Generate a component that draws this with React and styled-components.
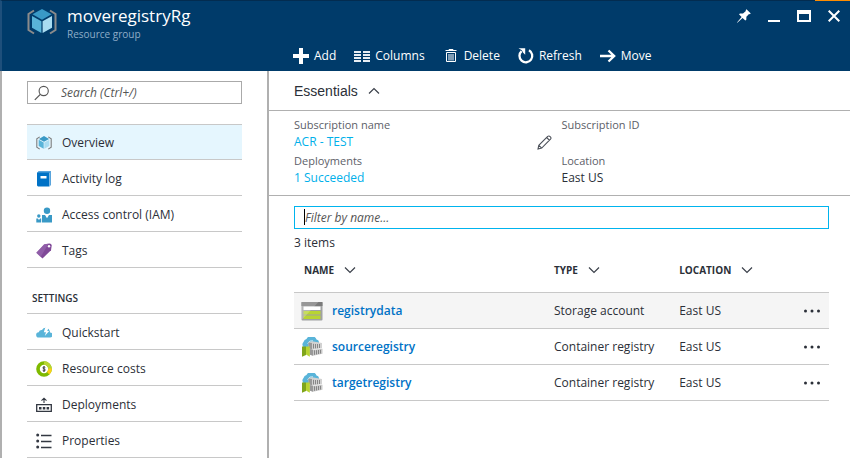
import React from "react";
import styled, { createGlobalStyle } from "styled-components";

const GlobalStyle = createGlobalStyle`
  *, *::before, *::after { box-sizing: border-box; }
  body {
    margin: 0;
    background: #fff;
    color: #2b2f38;
    font-family: "Open Sans", "Segoe UI", "Noto Sans", sans-serif;
    font-size: 12px;
    line-height: 16px;
  }
  button, input { font: inherit; color: inherit; }
  svg { display: block; flex: none; }
`;

const Blade = styled.div`
  display: flex;
  flex-direction: column;
  min-height: 100vh;
`;

const Header = styled.header`
  height: 71px;
  padding: 6px 8px 0 25px;
  background: #003b6a;
  color: #fff;
  border-top: 1px solid #032c50;
  border-left: 2px solid #1e4f7b;
  display: grid;
  grid-template-columns: 266px 1fr auto;
  grid-template-rows: 37px 24px;
  position: relative;

  &::after {
    content: "";
    position: absolute;
    top: -1px;
    right: 0;
    width: 35px;
    height: 1px;
    background: #ff8c00;
  }
`;

const Brand = styled.div`
  display: flex;
  gap: 10px;
`;

const Title = styled.h1`
  margin: 0;
  font-size: 17px;
  line-height: 18px;
  font-weight: 400;
`;

const Subtitle = styled.p`
  margin: 2px 0 0;
  font-size: 10px;
  line-height: 14px;
  color: #8fadc8;
`;

const WindowControls = styled.div`
  grid-column: 3;
  display: flex;
  align-items: flex-start;
  gap: 14px;
`;

const IconButton = styled.button`
  display: flex;
  align-items: center;
  justify-content: center;
  width: ${(p) => p.$width || 16}px;
  height: ${(p) => p.$height || 18}px;
  padding: 0;
  border: 0;
  background: none;
  cursor: pointer;
`;

const Toolbar = styled.div`
  grid-column: 2 / 4;
  display: flex;
  align-items: center;
  gap: 18px;
`;

const ToolButton = styled.button`
  display: flex;
  align-items: center;
  gap: 5px;
  padding: 0;
  border: 0;
  background: none;
  line-height: 18px;
  white-space: nowrap;
  cursor: pointer;
`;

const Body = styled.div`
  flex: 1;
  display: flex;
  border-left: 2px solid #b0b0b0;
`;

const Sidebar = styled.aside`
  width: 267px;
  flex: none;
  padding: 10px 25px 0;
  border-right: 2px solid #b0b0b0;
`;

const SearchBox = styled.label`
  display: flex;
  align-items: center;
  gap: 11px;
  height: 23px;
  padding: 0 6px;
  border: 1px solid #aaa;
  margin-bottom: 20px;
`;

const TextInput = styled.input`
  flex: 1;
  min-width: 0;
  padding: 0;
  border: 0;
  outline: 0;
  background: transparent;

  &::placeholder {
    color: #555;
    opacity: 1;
    font-style: italic;
  }
`;

const NavList = styled.ul`
  margin: 0;
  padding: 0;
  list-style: none;
  border-top: 1px solid #c8c8c8;
`;

const NavItem = styled.li`
  border-bottom: 1px solid #c8c8c8;
`;

const NavLink = styled.a`
  display: flex;
  align-items: center;
  gap: 10px;
  height: ${(p) => (p.$active ? 34 : 35)}px;
  padding: 2px 10px 0 9px;
  color: inherit;
  text-decoration: none;
  background: ${(p) => (p.$active ? "#e5f6fe" : "transparent")};
`;

const NavHeading = styled.h2`
  margin: 0;
  padding: 22px 5px 7px;
  font-size: 10px;
  line-height: 16px;
  font-weight: 600;
`;

const Main = styled.main`
  flex: 1;
  min-width: 0;
`;

const EssentialsToggle = styled.button`
  display: flex;
  align-items: center;
  gap: 10px;
  width: 100%;
  height: 40px;
  padding: 0 25px;
  border: 0;
  border-bottom: 1px solid #b0b0b0;
  background: none;
  font-family: "Liberation Sans", Arial, sans-serif;
  font-size: 14px;
  cursor: pointer;
`;

const Essentials = styled.div`
  display: grid;
  grid-template-columns: 1fr 1fr;
  row-gap: 3px;
  padding: 6px 21px 9px 25px;
  border-bottom: 1px solid #b0b0b0;
`;

const Property = styled.div`
  display: flex;
  align-items: flex-end;
  justify-content: space-between;
  height: 33px;
  padding-right: 10px;
`;

const PropertyList = styled.dl`
  margin: 0;
  height: 33px;
`;

const PropertyName = styled.dt`
  font-size: 11px;
  color: #5c6068;
`;

const PropertyValue = styled.dd`
  margin: 0;
  font-size: 12px;
  line-height: 18px;
`;

const ValueLink = styled.a`
  color: #00b0ea;
  text-decoration: none;
`;

const Items = styled.section`
  padding: 10px 21px 0 25px;
`;

const FilterBox = styled.label`
  position: relative;
  display: flex;
  align-items: center;
  height: 23px;
  padding: 0 10px;
  border: 1px solid #00b4ee;
`;

const Caret = styled.span`
  position: absolute;
  left: 9px;
  top: 2px;
  width: 1px;
  height: 16px;
  background: #000;
`;

const Count = styled.p`
  margin: 6px 0 9px;
`;

const Table = styled.table`
  width: 100%;
  table-layout: fixed;
  border-collapse: collapse;
`;

const Row = styled.tr`
  height: 36px;
  border-top: 1px solid #c8c8c8;
  border-bottom: 1px solid #c8c8c8;
  background: ${(p) => (p.$highlight ? "#f5f5f5" : "transparent")};
`;

const Th = styled.th`
  width: ${(p) => p.$width};
  height: 32px;
  padding: ${(p) => (p.$first ? "0 0 11px 10px" : "0 0 11px")};
  text-align: left;
`;

const SortButton = styled.button`
  display: flex;
  align-items: center;
  gap: 10px;
  padding: 0;
  border: 0;
  background: none;
  font-size: 10px;
  font-weight: 700;
  cursor: pointer;
`;

const Td = styled.td`
  padding: 2px 0 0;
`;

const NameCell = styled.div`
  display: flex;
  align-items: center;
  gap: 9px;
  padding-left: 7px;
`;

const NameLink = styled.a`
  color: #0072c6;
  font-weight: 600;
  text-decoration: none;
`;

const ActionCell = styled.div`
  display: flex;
  justify-content: flex-end;
  padding-right: 8px;
`;

function ResourceGroupIcon({ size, bracket }) {
  return (
    <svg width={size} height={size} viewBox="0 0 30 30">
      <path d="M7 3.5 1.5 7v16L7 26.500M23 3.500 28.500 7v16L23 26.500" fill="none" stroke={bracket} strokeWidth="2" />
      <path d="M15 2 24.500 7.300 15 12.700 5.500 7.300z" fill="#3999c6" />
      <path d="M5 9 14.400 14.200V26L5 20.700z" fill="#59b4d9" />
      <path d="M25 9 15.600 14.200V26L25 20.700z" fill="#a9dcf1" />
    </svg>
  );
}

function PinIcon() {
  return (
    <svg width="14" height="14" viewBox="0 0 14 14">
      <path d="M9.500.2 13.800 4.500 12.600 5.200 12 5 9.400 7.800 9.300 10.700 8.300 11.600 5.600 9 .3 13.700 0 13.500 4.600 7.900 2 5.300 3 4.500 6 4.500 8.900 2 8.700 1.200z" fill="#fff" />
    </svg>
  );
}

function MinimizeIcon() {
  return (
    <svg width="12" height="12" viewBox="0 0 12 12">
      <rect y="10" width="12" height="2" fill="#fff" />
    </svg>
  );
}

function MaximizeIcon() {
  return (
    <svg width="14" height="12" viewBox="0 0 14 12">
      <path d="M0 0h14v12H0zM2 4v6h10V4z" fill="#fff" fillRule="evenodd" />
    </svg>
  );
}

function CloseIcon() {
  return (
    <svg width="12" height="12" viewBox="0 0 12 12">
      <path d="M.7.700 11.300 11.300M11.300.700.700 11.300" stroke="#fff" strokeWidth="2" />
    </svg>
  );
}

function AddIcon() {
  return (
    <svg width="16" height="16" viewBox="0 0 16 16">
      <path d="M6 0h4v6h6v4H10v6H6V10H0V6h6z" fill="#fff" />
    </svg>
  );
}

function ColumnsIcon() {
  return (
    <svg width="16" height="16" viewBox="0 0 16 16">
      <path d="M0 3h7v2H0zM9 3h7v2H9zM0 6h7v2H0zM9 6h7v2H9zM0 9h7v2H0zM9 9h7v2H9zM0 12h7v2H0zM9 12h7v2H9z" fill="#e8eef4" />
    </svg>
  );
}

function DeleteIcon() {
  return (
    <svg width="16" height="16" viewBox="0 0 16 16">
      <path d="M6 2V1.500h4V2M2.500 2.500h11" fill="none" stroke="#fff" strokeWidth="1" />
      <path d="M3.500 4.500v9h9v-9z" fill="none" stroke="#fff" strokeWidth="1" />
      <path d="M6 6v6.500M8 6v6.500M10 6v6.500" stroke="#fff" strokeWidth="1" />
    </svg>
  );
}

function RefreshIcon() {
  return (
    <svg width="16" height="16" viewBox="0 0 16 16">
      <path d="M11 2.300a6.400 6.400 0 1 1-7.400.8" fill="none" stroke="#fff" strokeWidth="2.300" />
      <path d="M.500.200H7.200V6.800L5.200 4.800 3.800 2.300z" fill="#fff" />
    </svg>
  );
}

function MoveIcon() {
  return (
    <svg width="16" height="16" viewBox="0 0 16 16">
      <path d="M0 8h14M8.500 2.500 14.200 8 8.500 13.500" fill="none" stroke="#fff" strokeWidth="2.300" />
    </svg>
  );
}

function SearchIcon() {
  return (
    <svg width="16" height="16" viewBox="0 0 16 16">
      <circle cx="9.700" cy="6" r="4.600" fill="none" stroke="#555" strokeWidth="1.100" />
      <path d="M6.300 9.300.8 14.800" stroke="#555" strokeWidth="1.200" />
    </svg>
  );
}

function LogIcon() {
  return (
    <svg width="16" height="16" viewBox="0 0 16 16">
      <path d="M2.500 0H15v14l-1 1V2H1.200z" fill="#59a4dc" />
      <path d="M1 1.500h12.500V15.500H2L1 14.500z" fill="#0072c6" />
      <rect x="4.500" y="5" width="6" height="2.500" fill="#fff" />
    </svg>
  );
}

function PeopleIcon() {
  return (
    <svg width="16" height="16" viewBox="0 0 16 16">
      <circle cx="11" cy="3.800" r="3.200" fill="#3999c6" />
      <path d="M6 15.500V8h3l2 3.300L13 8h3v7.500z" fill="#3999c6" />
      <circle cx="2.800" cy="9" r="1.700" fill="#3999c6" />
      <path d="M.3 15.500v-4h1.500l1.200 1.500 1.100-1.500h1.100v4z" fill="#3999c6" />
    </svg>
  );
}

function TagIcon() {
  return (
    <svg width="16" height="16" viewBox="0 0 16 16">
      <path d="M.300 9.800 8.300 1.300 13.500.5Q15.600.5 15.700 2.500L15 7.200 6.500 15.500z" fill="#804998" />
      <path d="M.300 9.800 8.300 1.300 12.500.700 4.600 14z" fill="#9b6ab2" opacity=".6" />
      <circle cx="13" cy="3.300" r="1.200" fill="#fff" />
    </svg>
  );
}

function QuickstartIcon() {
  return (
    <svg width="16" height="16" viewBox="0 0 16 16">
      <path d="M2.800 12.500a2.600 2.600 0 0 1-.1-5.200A3.200 3.200 0 0 1 6 5a4.300 4.300 0 0 1 7.900 1.200v1.300a2.500 2.500 0 0 1 .2 5z" fill="#59b4d9" />
      <path d="M9.300 2.500h3.500L11.200 6h2L8.800 11l1.200-3.800H7.800z" fill="#fff" />
    </svg>
  );
}

function CostsIcon() {
  return (
    <svg width="16" height="16" viewBox="0 0 16 16">
      <circle cx="8" cy="8" r="6" fill="none" stroke="#7fba00" strokeWidth="3.600" />
      <path d="M8 2a6 6 0 0 1 5.600 8" fill="none" stroke="#b8d432" strokeWidth="3.600" />
      <path d="M13.900 7.500a6 6 0 0 1-1.700 4.800" fill="none" stroke="#fcd116" strokeWidth="3.600" />
      <path d="M9.300 6.500Q8.800 6 8 6 6.900 6 6.900 6.900C6.900 8.100 9.300 7.700 9.300 9Q9.300 9.900 8 9.900 7.200 9.900 6.700 9.400M8 5v6" fill="none" stroke="#333" strokeWidth=".9" />
    </svg>
  );
}

function DeploymentsIcon() {
  return (
    <svg width="16" height="16" viewBox="0 0 16 16">
      <path d="M8 6V1.200M5.500 3.700 8 1.200l2.500 2.500" fill="none" stroke="#333842" strokeWidth="1.100" />
      <path d="M.700 7.700h14.600v6.600H.700z" fill="none" stroke="#333842" strokeWidth="1.300" />
      <path d="M3 10h2.500v2.400H3zM6.800 10h2.500v2.400H6.800zM10.600 10h2.500v2.400h-2.500z" fill="#333842" />
    </svg>
  );
}

function PropertiesIcon() {
  return (
    <svg width="16" height="16" viewBox="0 0 16 16">
      <circle cx="1.700" cy="2" r="1.500" fill="#333842" />
      <circle cx="1.700" cy="8" r="1.500" fill="#333842" />
      <circle cx="1.700" cy="14" r="1.500" fill="#333842" />
      <path d="M5 2.500h10.500M5 8.500h10.500M5 14.500h10.500" stroke="#333842" strokeWidth="1.700" />
    </svg>
  );
}

function Chevron({ up }) {
  return (
    <svg width="12" height="8" viewBox="0 0 12 8">
      <path d={up ? "M1 6.500 6 1.500 11 6.500" : "M1 1.500 6 6.500 11 1.500"} fill="none" stroke="#3b404a" strokeWidth="1.200" />
    </svg>
  );
}

function PencilIcon() {
  return (
    <svg width="15" height="15" viewBox="0 0 15 15">
      <path d="M1 14 1.800 10.300 10.700 1.400Q12 .4 13.200 1.700 14.600 3 13.500 4.200L4.700 13.100zM1.800 10.300 4.700 13.100M9.700 2.500l2.800 2.800" fill="none" stroke="#4a4f58" strokeWidth="1.100" />
    </svg>
  );
}

function StorageIcon() {
  return (
    <svg width="22" height="20" viewBox="0 0 22 20">
      <rect x=".5" y="1" width="21" height="18.500" rx="1" fill="#a0a1a2" />
      <path d="M.500 1h21v4H.500z" fill="#7a7a7a" />
      <path d="M2.500 5.500h17V9h-17z" fill="#fff" />
      <path d="M2.500 10h17v3.500h-17zM2.500 14.500h17V18h-17z" fill="#b8d432" />
      <path d="M.500 1h17L2 17.500.500 19z" fill="#fff" opacity=".22" />
    </svg>
  );
}

function RegistryIcon() {
  return (
    <svg width="22" height="20" viewBox="0 0 22 20">
      <path d="M3 10.500A3.500 3.500 0 0 1 2.500 5 4.500 4.500 0 0 1 5.500 2 5.500 5.500 0 0 1 15.500 2.500 3 3 0 0 1 18 5v4z" fill="#59b4d9" />
      <path d="M6.500 6.500Q8.500 3 12 3.800" fill="none" stroke="#fff" opacity=".7" />
      <path d="M7.500 5.500 11 4.300 21 6v5.200L11 12.500 7.500 11z" fill="#d2d2d2" />
      <path d="M7.500 5.500 11 6v6.500L7.500 11z" fill="#999" />
      <path d="M12.500 6.800v4.700M14.500 7v4.300M16.500 7v4.200M18.500 7v4" stroke="#868686" />
      <path d="M8.500 12 12 12.800 21.500 11.800v5L12 18.800 8.500 17.500z" fill="#cacaca" />
      <path d="M8.500 12 12 12.800v6L8.500 17.500z" fill="#999" />
      <path d="M13.500 13.300v4.500M15.500 13.200v4.200M17.500 13v4M19.500 12.800v3.700" stroke="#858585" />
      <path d="M1 9.500h4V18L1 19.700z" fill="#7fa51b" />
      <path d="M5 9.500H8.800V19.700L5 17.500z" fill="#b8d432" />
    </svg>
  );
}

function EllipsisIcon() {
  return (
    <svg width="18" height="6" viewBox="0 0 18 6">
      <circle cx="2.500" cy="3" r="1.500" fill="#2b2f38" />
      <circle cx="9" cy="3" r="1.500" fill="#2b2f38" />
      <circle cx="15.500" cy="3" r="1.500" fill="#2b2f38" />
    </svg>
  );
}

const tools = [
  { label: "Add", Icon: AddIcon },
  { label: "Columns", Icon: ColumnsIcon },
  { label: "Delete", Icon: DeleteIcon },
  { label: "Refresh", Icon: RefreshIcon },
  { label: "Move", Icon: MoveIcon },
];

const generalLinks = [
  { label: "Overview", icon: <ResourceGroupIcon size={16} bracket="#7a7a7a" />, active: true },
  { label: "Activity log", icon: <LogIcon /> },
  { label: "Access control (IAM)", icon: <PeopleIcon /> },
  { label: "Tags", icon: <TagIcon /> },
];

const settingsLinks = [
  { label: "Quickstart", icon: <QuickstartIcon /> },
  { label: "Resource costs", icon: <CostsIcon /> },
  { label: "Deployments", icon: <DeploymentsIcon /> },
  { label: "Properties", icon: <PropertiesIcon /> },
];

const resources = [
  { name: "registrydata", type: "Storage account", location: "East US", Icon: StorageIcon },
  { name: "sourceregistry", type: "Container registry", location: "East US", Icon: RegistryIcon },
  { name: "targetregistry", type: "Container registry", location: "East US", Icon: RegistryIcon },
];

const columns = [
  { label: "NAME", width: "48.6%" },
  { label: "TYPE", width: "23.4%" },
  { label: "LOCATION", width: "20%" },
];

function Navigation({ links }) {
  return (
    <NavList>
      {links.map(({ label, icon, active }) => (
        <NavItem key={label}>
          <NavLink href="#" $active={active} aria-current={active ? "page" : undefined}>
            {icon}
            {label}
          </NavLink>
        </NavItem>
      ))}
    </NavList>
  );
}

function EssentialProperty({ name, value, link, editable }) {
  return (
    <Property>
      <PropertyList>
        <PropertyName>{name}</PropertyName>
        <PropertyValue>{link ? <ValueLink href="#">{value}</ValueLink> : value}</PropertyValue>
      </PropertyList>
      {editable && (
        <IconButton aria-label="Change subscription" $width={15} $height={15}>
          <PencilIcon />
        </IconButton>
      )}
    </Property>
  );
}

export default function App() {
  return (
    <>
      <GlobalStyle />
      <Blade>
        <Header>
          <Brand>
            <ResourceGroupIcon size={30} bracket="#8b8b8b" />
            <div>
              <Title>moveregistryRg</Title>
              <Subtitle>Resource group</Subtitle>
            </div>
          </Brand>
          <WindowControls>
            <IconButton aria-label="Pin"><PinIcon /></IconButton>
            <IconButton aria-label="Minimize"><MinimizeIcon /></IconButton>
            <IconButton aria-label="Maximize"><MaximizeIcon /></IconButton>
            <IconButton aria-label="Close"><CloseIcon /></IconButton>
          </WindowControls>
          <Toolbar>
            {tools.map(({ label, Icon }) => (
              <ToolButton key={label}>
                <Icon />
                {label}
              </ToolButton>
            ))}
          </Toolbar>
        </Header>
        <Body>
          <Sidebar>
            <SearchBox>
              <SearchIcon />
              <TextInput type="text" placeholder="Search (Ctrl+/)" aria-label="Search" />
            </SearchBox>
            <Navigation links={generalLinks} />
            <NavHeading>SETTINGS</NavHeading>
            <Navigation links={settingsLinks} />
          </Sidebar>
          <Main>
            <EssentialsToggle aria-expanded="true">
              Essentials
              <Chevron up />
            </EssentialsToggle>
            <Essentials>
              <EssentialProperty name="Subscription name" value="ACR - TEST" link editable />
              <EssentialProperty name="Subscription ID" />
              <EssentialProperty name="Deployments" value="1 Succeeded" link />
              <EssentialProperty name="Location" value="East US" />
            </Essentials>
            <Items>
              <FilterBox>
                <Caret />
                <TextInput type="text" placeholder="Filter by name..." aria-label="Filter by name" />
              </FilterBox>
              <Count>3 items</Count>
              <Table>
                <thead>
                  <tr>
                    {columns.map(({ label, width }, index) => (
                      <Th key={label} $width={width} $first={index === 0} scope="col">
                        <SortButton>
                          {label}
                          <Chevron />
                        </SortButton>
                      </Th>
                    ))}
                    <Th $width="8%" aria-label="Actions" />
                  </tr>
                </thead>
                <tbody>
                  {resources.map(({ name, type, location, Icon }, index) => (
                    <Row key={name} $highlight={index === 0}>
                      <Td>
                        <NameCell>
                          <Icon />
                          <NameLink href="#">{name}</NameLink>
                        </NameCell>
                      </Td>
                      <Td>{type}</Td>
                      <Td>{location}</Td>
                      <Td>
                        <ActionCell>
                          <IconButton aria-label={`More actions for ${name}`} $width={18}>
                            <EllipsisIcon />
                          </IconButton>
                        </ActionCell>
                      </Td>
                    </Row>
                  ))}
                </tbody>
              </Table>
            </Items>
          </Main>
        </Body>
      </Blade>
    </>
  );
}
